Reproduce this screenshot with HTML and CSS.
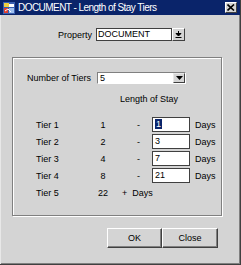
FILE: index.html
```html
<!DOCTYPE html>
<html lang="en">
  <head>
    <meta charset="UTF-8" />
    <title>DOCUMENT - Length of Stay Tiers</title>
    <link rel="stylesheet" href="styles.css">
  </head>
  <body>
    <div class="window">
      <div class="titlebar">
        <svg class="app-icon" width="12" height="12" viewBox="0 0 12 12">
          <rect x="0" y="0" width="12" height="12" fill="#3a5fb0"/>
          <rect x="1" y="1" width="5" height="4" fill="#f0d040"/>
          <rect x="6" y="2" width="5" height="3" fill="#ffffff"/>
          <rect x="1" y="6" width="4" height="5" fill="#e04030"/>
          <rect x="6" y="6" width="5" height="5" fill="#9fc0f0"/>
          <path d="M2 9 L5 7 L8 10" stroke="#fff" stroke-width="1" fill="none"/>
        </svg>
        <span class="title">DOCUMENT - Length of Stay Tiers</span>
        <span class="close-btn">
          <svg width="8" height="7" viewBox="0 0 8 7">
            <path d="M0.5 0.5 L7 6.5 M7 0.5 L0.5 6.5" stroke="#000" stroke-width="1.6"/>
          </svg>
        </span>
      </div>

      <div class="content">
        <div class="property-row">
          <span class="label">Property</span>
          <div class="combo">
            <span class="combo-text">DOCUMENT</span>
            <span class="combo-btn">
              <svg width="7" height="7" viewBox="0 0 7 7">
                <path d="M3.5 0 V3 M1 2.5 H6 L3.5 5 Z" stroke="#000" fill="#000" stroke-width="1"/>
                <path d="M0.5 6.5 H6.5" stroke="#000" stroke-width="1"/>
              </svg>
            </span>
          </div>
        </div>

        <div class="group">
          <div class="tiers-row">
            <span class="tiers-label">Number of Tiers</span>
            <div class="select">
              <span class="select-text">5</span>
              <span class="select-btn">
                <svg width="7" height="4" viewBox="0 0 7 4">
                  <path d="M0 0 H7 L3.5 4 Z" fill="#000"/>
                </svg>
              </span>
            </div>
          </div>

          <div class="los-head">Length of Stay</div>

          <div class="tier-grid">
            <span>Tier 1</span><span class="num">1</span><span class="dash">-</span>
            <span class="field"><span class="sel">1</span></span><span class="days">Days</span>

            <span>Tier 2</span><span class="num">2</span><span class="dash">-</span>
            <span class="field">3</span><span class="days">Days</span>

            <span>Tier 3</span><span class="num">4</span><span class="dash">-</span>
            <span class="field">7</span><span class="days">Days</span>

            <span>Tier 4</span><span class="num">8</span><span class="dash">-</span>
            <span class="field">21</span><span class="days">Days</span>

            <span>Tier 5</span><span class="num">22</span><span class="plus">+&nbsp;&nbsp;Days</span>
          </div>
        </div>

        <div class="buttons">
          <button class="btn btn-ok">OK</button>
          <button class="btn">Close</button>
        </div>
      </div>
    </div>
  </body>
</html>
```

FILE: styles.css
```css
body {
  margin: 0;
  font-family: "Liberation Sans", Arial, sans-serif;
  font-size: 9px;
  color: #000;
}

.window {
  width: 241px;
  height: 265px;
  box-sizing: border-box;
  background-color: #d4d4d4;
  border-right: 1px solid #404040;
  border-bottom: 1px solid #404040;
  box-shadow: inset 1px 0 0 #e8e8e8, inset -1px -1px 0 #808080;
}

/* barra de titulo */
.titlebar {
  height: 15px;
  background-color: #0a246a;
  display: flex;
  align-items: center;
  padding-left: 3px;
}

.app-icon {
  flex: none;
}

.title {
  color: #fff;
  font-size: 10px;
  letter-spacing: -0.55px;
  margin-left: 3px;
  white-space: nowrap;
}

.close-btn {
  margin-left: auto;
  margin-right: 3px;
  width: 12px;
  height: 11px;
  box-sizing: border-box;
  background-color: #d4d4d4;
  border: 1px solid;
  border-color: #fff #404040 #404040 #fff;
  display: flex;
  align-items: center;
  justify-content: center;
}

/* contenido */
.property-row {
  display: flex;
  align-items: center;
  margin-top: 13px;
  padding-left: 58px;
  height: 13px;
}

.label {
  width: 38px;
}

.combo {
  display: flex;
  height: 13px;
}

.combo-text {
  width: 76px;
  box-sizing: border-box;
  background-color: #fff;
  border: 1px solid #404040;
  padding-left: 1px;
  line-height: 11px;
}

.combo-btn,
.select-btn {
  width: 13px;
  box-sizing: border-box;
  background-color: #d4d4d4;
  border: 1px solid;
  border-color: #fff #404040 #404040 #fff;
  display: flex;
  align-items: center;
  justify-content: center;
}

.group {
  margin: 16px 18px 0 12px;
  height: 159px;
  box-sizing: border-box;
  border: 1px solid #808080;
  box-shadow: inset 1px 1px 0 #fff, 1px 1px 0 #fff;
  padding: 14px 0 0 14px;
}

.tiers-row {
  display: flex;
  align-items: center;
  height: 12px;
}

.tiers-label {
  width: 70px;
}

.select {
  display: flex;
  width: 89px;
  height: 12px;
  box-sizing: border-box;
  background-color: #fff;
  border: 1px solid #808080;
  border-right-color: #fff;
  border-bottom-color: #fff;
}

.select-text {
  flex: 1;
  padding-left: 2px;
  line-height: 10px;
}

.select-btn {
  width: 12px;
  border-color: #e8e8e8 #404040 #404040 #e8e8e8;
}

.los-head {
  margin-top: 10px;
  padding-left: 93px;
  line-height: 11px;
}

.tier-grid {
  display: grid;
  grid-template-columns: 52px 30px 34px 38px auto;
  grid-auto-rows: 15px;
  row-gap: 2px;
  align-items: center;
  margin-top: 12px;
  padding-left: 9px;
}

.num {
  text-align: center;
}

.dash {
  padding-left: 19px;
}

.field {
  height: 15px;
  box-sizing: border-box;
  background-color: #fff;
  border: 1px solid #404040;
  padding-left: 2px;
  line-height: 13px;
}

.sel {
  background-color: #0a246a;
  color: #fff;
  padding: 0 1px;
}

.days {
  padding-left: 5px;
}

.plus {
  grid-column: 3 / span 3;
  padding-left: 4px;
}

.buttons {
  display: flex;
  justify-content: flex-end;
  margin-top: 12px;
  padding-right: 22px;
}

.btn {
  width: 56px;
  height: 20px;
  margin: 0;
  padding: 0;
  font-family: inherit;
  font-size: 9px;
  background-color: #d4d4d4;
  border: 1px solid;
  border-color: #fff #404040 #404040 #fff;
  box-shadow: inset -1px -1px 0 #808080;
}

.btn-ok {
  width: 55px;
}
```
